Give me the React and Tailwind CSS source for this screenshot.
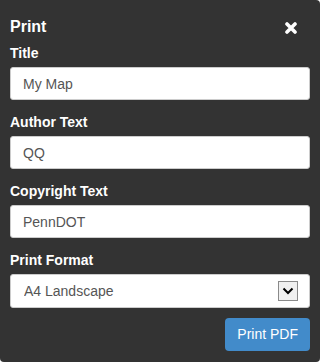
import React from "react";

const font = { fontFamily: '"Liberation Sans", Arial, sans-serif' };

function Field({ label, value, first }) {
  return (
    <div className={first ? "mt-[6px]" : "mt-[12px]"}>
      <label className="block h-[20px] text-[14px] leading-[20px] font-bold text-white mb-[4px]">
        {label}
      </label>
      <input
        type="text"
        defaultValue={value}
        className="block w-full h-[33px] rounded-[3px] border border-[#ccc] bg-white pl-[12px] text-[14px] text-[#555] outline-none"
      />
    </div>
  );
}

export default function App() {
  return (
    <div className="w-[320px] h-[362px] bg-white" style={font}>
      <div className="h-full bg-[#333333] rounded-tr-[4px] rounded-b-[4px] px-[10px] pt-[17px]">
        {/* Header */}
        <div className="flex items-center justify-between h-[20px]">
          <h2 className="text-[16px] leading-[20px] font-bold text-white">Print</h2>
          <button className="mr-[13px] mt-[2px] text-white">
            <svg width="12" height="12" viewBox="0 0 12 12">
              <path d="M2 2 L10 10 M10 2 L2 10" stroke="white" strokeWidth="3.6" strokeLinecap="round" />
            </svg>
          </button>
        </div>

        <Field label="Title" value="My Map" first />
        <Field label="Author Text" value="QQ" />
        <Field label="Copyright Text" value="PennDOT" />

        <div className="mt-[12px]">
          <label className="block h-[20px] text-[14px] leading-[20px] font-bold text-white mb-[4px]">
            Print Format
          </label>
          <div className="relative">
            <select
              defaultValue="a4l"
              className="block w-full h-[34px] appearance-none rounded-[3px] border border-[#ccc] bg-white pl-[13px] text-[14px] text-[#555] outline-none"
            >
              <option value="a4l">A4 Landscape</option>
              <option value="a4p">A4 Portrait</option>
            </select>
            <div className="pointer-events-none absolute right-[12px] top-[7px] w-[20px] h-[20px] border border-[#8a8a8a] bg-[#f0f0f0] flex items-center justify-center">
              <svg width="12" height="8" viewBox="0 0 12 8">
                <path d="M1.5 1.5 L6 6 L10.5 1.5" fill="none" stroke="black" strokeWidth="2" />
              </svg>
            </div>
          </div>
        </div>

        <div className="flex justify-end mt-[10px]">
          <button className="h-[33px] px-[12px] rounded-[4px] bg-[#428bca] text-white text-[14px]">
            Print PDF
          </button>
        </div>
      </div>
    </div>
  );
}
